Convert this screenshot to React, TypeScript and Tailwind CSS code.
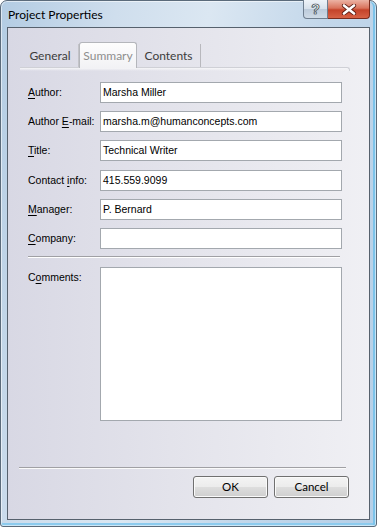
import React from "react";

const seg = { fontFamily: "Lato, 'Noto Sans', sans-serif" };
const dlg = { fontFamily: "'Liberation Sans', Arial, sans-serif" };

function U({ children }: { children: React.ReactNode }) {
  return <span className="underline underline-offset-[2px] decoration-[1px]">{children}</span>;
}

function Field({ label, value, mt }: { label: React.ReactNode; value: string; mt: string }) {
  return (
    <div className={`flex items-center ${mt}`}>
      <div className="w-[72px] text-[10.5px] text-black" style={dlg}>
        {label}
      </div>
      <div
        className="w-[242px] h-[21px] border border-[#a3a8ae] bg-white flex items-center pl-[2px] text-[10.5px] text-black"
        style={dlg}
      >
        {value}
      </div>
    </div>
  );
}

function Btn({ label }: { label: string }) {
  return (
    <div className="w-[75px] h-[22px] rounded-[3px] border border-[#707070] bg-[linear-gradient(180deg,#f4f4f4_0%,#ececec_48%,#dddddd_52%,#cfcfcf_100%)] shadow-[inset_0_0_0_1px_#fafafa] flex items-center justify-center text-[11.5px] text-black" style={seg}>
      {label}
    </div>
  );
}

export default function App() {
  return (
    <div className="w-[377px] h-[527px] bg-white">
      <div className="relative w-[377px] h-[527px] rounded-t-[7px] rounded-b-[3px] border border-[#5b6b7b] flex flex-col px-[6px] pb-[6px] bg-[linear-gradient(100deg,#b3cce3_0%,#cfdeed_25%,#dbe7f2_45%,#c3d7ea_70%,#b6cfe7_100%)] shadow-[inset_0_0_0_1px_rgba(255,255,255,0.55),inset_-3px_0_0_#7cc3ea,inset_0_-3px_0_#8ccbee]">
        {/* title bar */}
        <div className="h-[26px] flex items-start shrink-0">
          <span className="mt-[5px] ml-[1px] text-[12px] text-black" style={seg}>
            Project Properties
          </span>
          <div className="ml-auto flex -mt-[1px]">
            <div className="w-[25px] h-[19px] rounded-bl-[4px] border border-[#6f7f90] border-t-0 bg-[linear-gradient(180deg,#eef3f8_0%,#d7e1eb_48%,#bccbdb_52%,#cfdbe7_100%)] flex items-center justify-center">
              <span
                className="text-[14px] font-bold text-white leading-none"
                style={{ ...dlg, WebkitTextStroke: "0.6px #2e3a46", textShadow: "0 0 1px #2e3a46" }}
              >
                ?
              </span>
            </div>
            <div className="w-[42px] h-[19px] rounded-br-[4px] border border-[#7a2c1e] border-t-0 border-l-0 bg-[linear-gradient(180deg,#ecb3a4_0%,#d9735c_45%,#c4432a_55%,#d76246_100%)] flex items-center justify-center">
              <svg width="16" height="11" viewBox="0 0 16 11">
                <path d="M3 1.5 L13 9.5 M13 1.5 L3 9.5" stroke="#5a1a10" strokeWidth="4.2" strokeLinecap="round" />
                <path d="M3 1.5 L13 9.5 M13 1.5 L3 9.5" stroke="#ffffff" strokeWidth="2.6" strokeLinecap="round" />
              </svg>
            </div>
          </div>
        </div>

        {/* client area */}
        <div className="flex-1 border border-[#56616d] bg-[linear-gradient(90deg,#d8d8e4_0%,#e3e3eb_45%,#f0f0f4_100%)] flex flex-col">
          <div className="ml-[12px] w-[330px] mt-[13px]">
            {/* tabs */}
            <div className="flex items-end h-[26px] pl-[2px]">
              <div className="w-[57px] h-[23px] border-r border-[#c3c3c8] flex items-center justify-center text-[12px] text-[#3c3c3c]" style={seg}>
                General
              </div>
              <div className="w-[58px] h-[26px] -mb-[1px] relative z-10 rounded-t-[3px] border border-b-0 border-[#b4b6bb] bg-[linear-gradient(180deg,#fdfdfd_0%,#f2f2f5_100%)] flex items-center justify-center text-[12px] text-[#8e8e8e]" style={seg}>
                Summary
              </div>
              <div className="w-[64px] h-[23px] border-r border-[#b8b8bd] flex items-center justify-center text-[12px] text-[#3c3c3c]" style={seg}>
                Contents
              </div>
            </div>
            {/* panel */}
            <div className="rounded-tr-[3px] border-t border-r border-[#cfd0d6] h-[4px] bg-[linear-gradient(180deg,#f6f6f8_0%,rgba(240,240,244,0)_100%)]" />
            <div className="pl-[8px] -mt-[4px]">
              <Field label={<><U>A</U>uthor:</>} value="Marsha Miller" mt="mt-[15px]" />
              <Field label={<>Author <U>E</U>-mail:</>} value="marsha.m@humanconcepts.com" mt="mt-[8px]" />
              <Field label={<><U>T</U>itle:</>} value="Technical Writer" mt="mt-[8px]" />
              <Field label={<>Contact <U>i</U>nfo:</>} value="415.559.9099" mt="mt-[9px]" />
              <Field label={<><U>M</U>anager:</>} value="P. Bernard" mt="mt-[8px]" />
              <Field label={<><U>C</U>ompany:</>} value="" mt="mt-[8px]" />
              <div className="mt-[7px] w-[312px] h-[2px] border-t border-[#a0a0a4] border-b border-b-white" />
              <div className="flex mt-[9px]">
                <div className="w-[72px] pt-[3px] text-[10.5px] text-black" style={dlg}>
                  C<U>o</U>mments:
                </div>
                <div className="w-[242px] h-[154px] border border-[#a3a8ae] bg-white" />
              </div>
            </div>
          </div>
          {/* bottom separator */}
          <div className="ml-[11px] mt-[46px] w-[327px] h-[2px] border-t border-[#a0a0a4] border-b border-b-[#fafafa]" />
          <div className="flex justify-end gap-[6px] mr-[20px] mt-[7px]">
            <Btn label="OK" />
            <Btn label="Cancel" />
          </div>
        </div>
      </div>
    </div>
  );
}
